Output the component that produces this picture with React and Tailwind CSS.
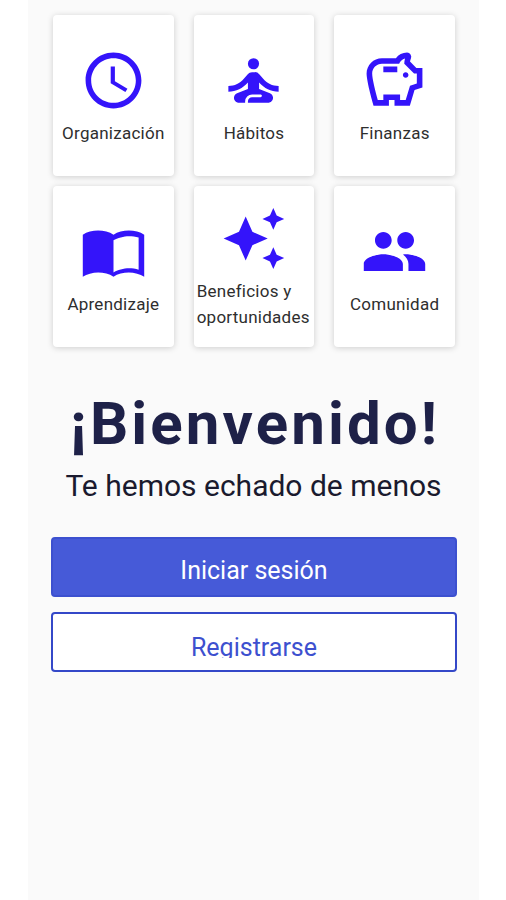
import React from "react";
import {
  MdSchedule,
  MdSelfImprovement,
  MdOutlineSavings,
  MdPeople,
} from "react-icons/md";

const BookIcon = ({ className }) => (
  <svg viewBox="0 0 24 24" fill="currentColor" className={className}>
    <path d="M17.5 4.5c-1.95 0-4.05.4-5.5 1.5-1.45-1.1-3.55-1.5-5.5-1.5S2.45 4.9 1 6v15c1.45-.9 3.55-1.5 5.5-1.5s4.05.4 5.5 1.5c1.45-1.1 3.55-1.5 5.5-1.5s4.05.6 5.5 1.5V6c-1.45-1.1-3.55-1.5-5.5-1.5zM21 18.5c-1.1-.35-2.3-.5-3.5-.5-1.7 0-4.15.65-5.5 1.5V8c1.35-.85 3.8-1.5 5.5-1.5 1.2 0 2.4.15 3.5.5v11.5z" />
  </svg>
);

const SparklesIcon = ({ className }) => (
  <svg viewBox="0 0 24 24" fill="currentColor" className={className}>
    <path d="M9.2 4.1L11.6 9.6L17.1 12L11.6 14.4L9.2 19.9L6.8 14.4L1.3 12L6.8 9.6z" />
    <path d="M19.1 1.1L20.3 3.8L23 5L20.3 6.2L19.1 8.9L17.9 6.2L15.2 5L17.9 3.8z" />
    <path d="M19.1 15.1L20.3 17.8L23 19L20.3 20.2L19.1 22.9L17.9 20.2L15.2 19L17.9 17.8z" />
  </svg>
);

const categories = [
  { label: "Organización", icon: MdSchedule },
  { label: "Hábitos", icon: MdSelfImprovement },
  { label: "Finanzas", icon: MdOutlineSavings },
  { label: "Aprendizaje", icon: BookIcon },
  { label: "Beneficios y oportunidades", icon: SparklesIcon },
  { label: "Comunidad", icon: MdPeople },
];

const CategoryCard = ({ label, icon: Icon }) => (
  <div className="flex flex-col items-center justify-center h-[161px] pt-px rounded bg-white shadow-[0_1px_6px_rgba(0,0,0,0.18)]">
    <Icon className="w-[67px] h-[67px] text-[#3414fa]" />
    <p className="mt-[6px] px-[3px] text-[17px] leading-[26px] tracking-[0.25px] text-[#2e2e2e]">
      {label}
    </p>
  </div>
);

const App = () => {
  return (
    <div className="h-[900px] overflow-hidden bg-white font-[Roboto,sans-serif]">
      <main className="ml-7 w-[451px] h-full bg-[#fafafa] pt-[15px]">
        {/* Categories */}
        <div className="ml-[25px] mr-6 grid grid-cols-3 gap-x-5 gap-y-[10px]">
          {categories.map((category) => (
            <CategoryCard key={category.label} {...category} />
          ))}
        </div>

        {/* Welcome */}
        <div className="mt-[42px] text-center">
          <h1 className="pl-[3px] text-[60px] leading-[70px] font-bold tracking-[3.1px] text-[#1e2148]">
            ¡Bienvenido!
          </h1>
          <p className="mt-[9px] text-[30px] leading-[36px] text-[#1a1a2e]">
            Te hemos echado de menos
          </p>
        </div>

        {/* Actions */}
        <div className="mt-[33px] ml-[23px] mr-[22px] flex flex-col gap-[15px]">
          <button className="h-[60px] rounded border-2 border-[#3c50cf] bg-[#465ad8] pt-[7px] text-[25px] leading-[30px] text-white">
            Iniciar sesión
          </button>
          <button className="h-[60px] flex justify-center rounded border-2 border-[#3448c8] bg-white pt-[19px] text-[25px] leading-[30px] text-[#3d50cf]">
            <span className="block h-[25px] overflow-hidden">Registrarse</span>
          </button>
        </div>
      </main>
    </div>
  );
};

export default App;
